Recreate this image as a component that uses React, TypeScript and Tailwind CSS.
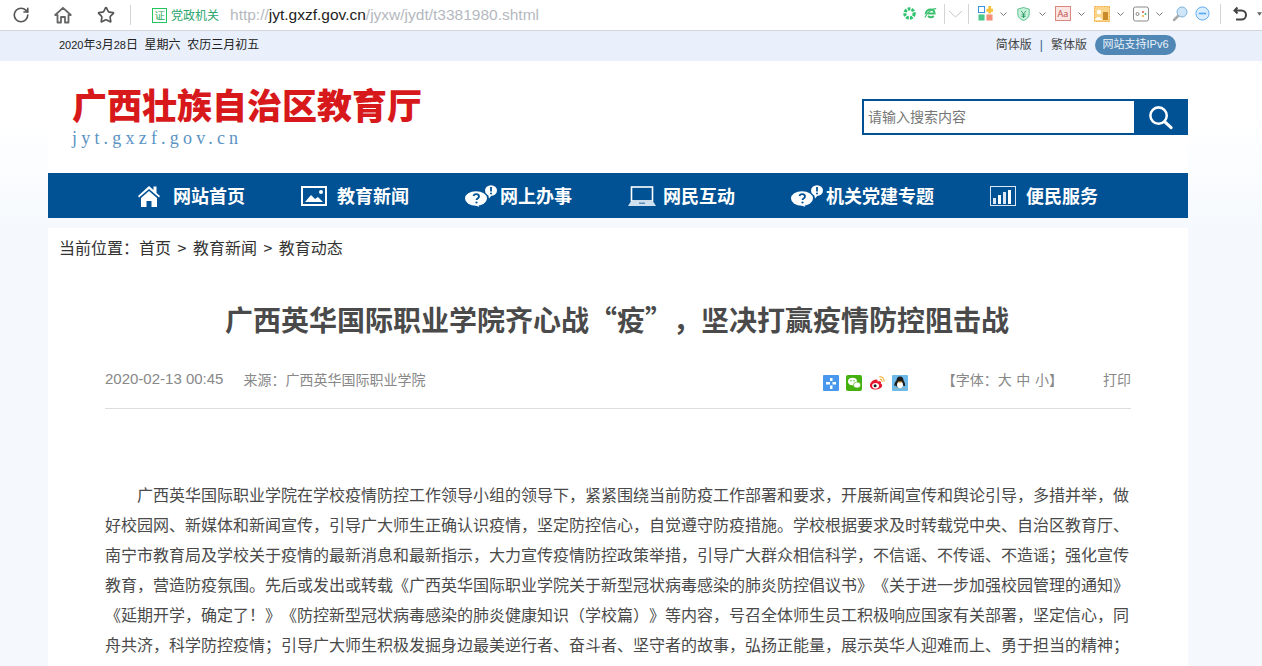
import { RotateCw, Star } from "lucide-react";

const sans = "font-['Liberation_Sans','Noto_Sans_CJK_SC',sans-serif]";
const cjk = "font-['Noto_Sans_CJK_SC',sans-serif]";

function Chev({ className = "" }: { className?: string }) {
  return (
    <svg viewBox="0 0 7 4" className={"h-1 w-[7px] " + className}>
      <path d="M.5.5l3 3 3-3" fill="none" stroke="#777" strokeWidth="1" />
    </svg>
  );
}

function Sep({ className = "" }: { className?: string }) {
  return <div className={"h-5 w-px bg-[#d4d4d4] " + className} />;
}

function BrowserBar() {
  return (
    <div className="flex h-[31px] items-center border-b border-[#d3d6da] bg-white">
      <RotateCw className="ml-[12px] h-[18px] w-[18px] text-[#555]" strokeWidth={2.2} />
      <svg viewBox="0 0 18 18" className="ml-[24px] h-[18px] w-[18px]">
        <path
          d="M9 1.800L16.800 9H14.500V16.500H11V11H7V16.500H3.500V9H1.200Z"
          fill="none"
          stroke="#666"
          strokeWidth="1.800"
          strokeLinejoin="round"
        />
      </svg>
      <Star className="ml-[25px] h-[18px] w-[18px] text-[#555]" strokeWidth={2.2} />
      <Sep className="ml-[15px]" />
      <div className="ml-[21px] flex h-[15px] w-[15px] items-center justify-center border border-[#22c55e] text-[10px] leading-none text-[#16a34a]">
        证
      </div>
      <span className={"ml-[4px] text-[12px] text-[#2aa56b] " + cjk}>党政机关</span>
      <span className={"ml-[11px] text-[15.500px] text-[#b5b9bf] " + sans}>
        http://<span className="text-[#222]">jyt.gxzf.gov.cn</span>/jyxw/jydt/t3381980.shtml
      </span>

      <div className="ml-auto flex items-center pb-[3px]">
        {/* green swirl */}
        <svg viewBox="0 0 14 14" className="h-[13px] w-[13px]">
          <circle cx="7" cy="7" r="5" fill="none" stroke="#2fc36f" strokeWidth="3.400" strokeDasharray="3 1.200" />
        </svg>
        {/* green browser e */}
        <svg viewBox="0 0 16 14" className="ml-[8px] h-[13px] w-[13px]">
          <path d="M2 8c0-4 3-6 6-6 3 0 5 2 5 5H5M5 10c2 2 5 2 7 0" fill="none" stroke="#3cc070" strokeWidth="2.400" />
          <path d="M1 12C4 5 10 1 15 1" fill="none" stroke="#3cc070" strokeWidth="1.400" />
        </svg>
        <Sep className="ml-[7px]" />
        <svg viewBox="0 0 15 8" className="ml-[3px] h-2 w-[15px]">
          <path d="M1 1l6.500 6 6.500-6" fill="none" stroke="#c4c4c4" strokeWidth="1" />
        </svg>
        <Sep className="ml-[5px]" />
        {/* app grid */}
        <svg viewBox="0 0 16 16" className="ml-[9px] h-[15px] w-[15px]">
          <rect x="0.500" y="0.500" width="6.500" height="6.500" fill="#fff" stroke="#2f8ee0" />
          <rect x="0.500" y="9" width="6.500" height="6.500" fill="#4cc98a" />
          <rect x="9" y="9" width="6.500" height="6.500" fill="#f58f7c" />
          <path d="M11 0h3v3h2v3h-2v2h-3V6H9V3h2z" fill="#f7c23a" />
        </svg>
        <Chev className="ml-[7px]" />
        {/* shield */}
        <svg viewBox="0 0 16 18" className="ml-[10px] h-4 w-[13px]">
          <path d="M8 1l7 2v6c0 4-3 6.500-7 8-4-1.500-7-4-7-8V3z" fill="#c8f0dc" stroke="#3cb878" />
          <path d="M5 5l3 4 3-4M8 9v5M5.500 10h5M5.500 12h5" fill="none" stroke="#23965c" strokeWidth="1" />
        </svg>
        <Chev className="ml-[9px]" />
        {/* font card */}
        <div className="ml-[9px] flex h-[15px] w-[16px] items-center justify-center border border-[#d98880] bg-[#fbe6e3] text-[9px] leading-none text-[#c0504d]">
          Aa
        </div>
        <Chev className="ml-[7px]" />
        {/* picture */}
        <svg viewBox="0 0 16 16" className="ml-[9px] h-4 w-4">
          <rect x="0.500" y="0.500" width="15" height="15" fill="#fbd58a" stroke="#f0a93a" strokeDasharray="2 1" />
          <circle cx="5" cy="6" r="2.200" fill="#fff" />
          <path d="M1 14c1-4 6-4 7 0z" fill="#fff" />
          <rect x="9" y="6" width="5" height="8" fill="#c98a2c" />
        </svg>
        <Chev className="ml-[7px]" />
        {/* game pad */}
        <svg viewBox="0 0 16 16" className="ml-[9px] h-4 w-4">
          <rect x="0.500" y="1" width="15" height="14" rx="2" fill="#fff" stroke="#888" />
          <circle cx="4.500" cy="8" r="1.500" fill="none" stroke="#888" />
          <circle cx="10" cy="6" r="1" fill="#e25555" />
          <circle cx="12.500" cy="8" r="1" fill="#3cb878" />
          <circle cx="10" cy="10" r="1" fill="#f0a93a" />
        </svg>
        <Chev className="ml-[7px]" />
        {/* zoom lens */}
        <svg viewBox="0 0 16 16" className="ml-[9px] h-4 w-4">
          <circle cx="10" cy="6" r="5" fill="#cfe6f8" stroke="#7fb2d8" />
          <path d="M6 10l-4 4" stroke="#aaa" strokeWidth="2.500" strokeLinecap="round" />
        </svg>
        {/* minus */}
        <svg viewBox="0 0 16 16" className="ml-[7px] h-[15px] w-[15px]">
          <circle cx="8" cy="8" r="7" fill="#dbeeff" stroke="#5aa9ee" />
          <path d="M4 8h8" stroke="#5aa9ee" strokeWidth="1.800" />
        </svg>
        <Sep className="ml-[10px]" />
        {/* undo */}
        <svg viewBox="0 0 14 16" className="ml-[12px] h-4 w-[14px]">
          <path
            d="M4.500 1.500L1.500 4.500L4.500 7.500M1.500 4.500H8.500a4.500 4.500 0 0 1 0 9H3"
            fill="none"
            stroke="#444"
            strokeWidth="2"
          />
        </svg>
        <svg viewBox="0 0 6 4" className="ml-[10px] h-1 w-[5px]">
          <path d="M0 0h6L3 4z" fill="#666" />
        </svg>
      </div>
    </div>
  );
}

function TopStrip() {
  return (
    <div className={"flex h-[30px] items-center bg-[#e9f0fc] pb-[3px] pl-[59px] text-[12px] text-[#222] " + sans}>
      <span className="whitespace-pre">
        <span className="text-[11px]">2020</span>年<span className="text-[11px]">3</span>月
        <span className="text-[11px]">28</span>日{"  "}星期六{"  "}农历三月初五
      </span>
      <div className="ml-auto flex items-center pr-[86px] text-[#444]">
        <span>简体版</span>
        <span className="mx-[8px] text-[#33628f]">|</span>
        <span>繁体版</span>
        <span className="ml-[8px] flex h-5 w-[81px] items-center justify-center rounded-full bg-[#5087b5] text-[11px] text-[#e8f0f8]">
          网站支持IPv6
        </span>
      </div>
    </div>
  );
}

function Brand() {
  return (
    <div className="flex h-[112px] items-start justify-between bg-white pl-[24px]">
      <div className="pt-[21px]">
        <div className={"text-[35px] font-black leading-[44px] text-[#d7191c] " + cjk}>广西壮族自治区教育厅</div>
        <div className="mt-[1px] font-['Liberation_Serif',serif] text-[18px] leading-[22px] tracking-[4.200px] text-[#5b93c4]">
          jyt.gxzf.gov.cn
        </div>
      </div>
      <div className="mt-[38px] flex h-[36px] w-[326px] border-2 border-[#005294] bg-white">
        <span className={"flex-1 pl-[4px] text-[14px] leading-[30px] text-[#777] " + cjk}>请输入搜索内容</span>
        <div className="flex w-[52px] items-center justify-center bg-[#005294]">
          <svg viewBox="0 0 28 28" className="h-[27px] w-[27px]">
            <circle cx="12" cy="12" r="8.500" fill="none" stroke="#fff" strokeWidth="2.600" />
            <path d="M18.500 18.500l6.500 6" stroke="#fff" strokeWidth="3.200" strokeLinecap="round" />
          </svg>
        </div>
      </div>
    </div>
  );
}

function ChatIcon() {
  return (
    <svg viewBox="0 0 32 22" className="h-[22px] w-[32px]">
      <ellipse cx="11" cy="13.500" rx="11" ry="7.300" fill="#fff" />
      <path d="M8 19l6 3-1-4z" fill="#fff" />
      <path
        d="M8.500 11c.5-2.500 5.500-2.500 5.500.5 0 2-2.500 2-2.500 3.500"
        fill="none"
        stroke="#005294"
        strokeWidth="1.800"
      />
      <circle cx="11.500" cy="17.500" r="1.100" fill="#005294" />
      <ellipse cx="26" cy="5.500" rx="6" ry="5.300" fill="#fff" />
      <path d="M23 9l1 4.500 3-3.500z" fill="#fff" />
      <path d="M26 2v4.500" stroke="#005294" strokeWidth="1.800" />
      <circle cx="26" cy="8.500" r="1" fill="#005294" />
    </svg>
  );
}

const navItems = [
  {
    label: "网站首页",
    gap: "ml-[13px]",
    icon: (
      <svg viewBox="0 0 22 22" className="h-[22px] w-[22px]">
        <path d="M11 1l4.500 4V1.500h3v6.500l3.500 3-1 1.500L11 4 1 12.500 0 11z" fill="#fff" />
        <path d="M3 13l8-7 8 7v9h-5.500v-6h-5v6H3z" fill="#fff" />
      </svg>
    ),
  },
  {
    label: "教育新闻",
    gap: "ml-[10px]",
    icon: (
      <svg viewBox="0 0 26 20" className="h-[20px] w-[26px]">
        <rect x="1" y="1" width="24" height="18" fill="none" stroke="#fff" strokeWidth="2" />
        <path d="M4 16l6-7 4 4 3-2 5 5z" fill="#fff" />
        <circle cx="20" cy="6" r="2" fill="#fff" />
      </svg>
    ),
  },
  { label: "网上办事", gap: "ml-[3px]", icon: <ChatIcon /> },
  {
    label: "网民互动",
    gap: "ml-[7px]",
    icon: (
      <svg viewBox="0 0 28 20" className="h-[20px] w-[28px]">
        <rect x="3.500" y="1" width="21" height="14" fill="none" stroke="#fff" strokeWidth="1.600" />
        <path d="M2.500 16h23l2.500 4H0z" fill="#cfe0ef" />
        <rect x="11" y="16.500" width="6" height="1.500" fill="#5b8db8" />
      </svg>
    ),
  },
  { label: "机关党建专题", gap: "ml-[3px]", icon: <ChatIcon /> },
  {
    label: "便民服务",
    gap: "ml-[10px]",
    icon: (
      <svg viewBox="0 0 26 20" className="h-[20px] w-[26px]">
        <rect x="0.500" y="0.500" width="25" height="19" fill="none" stroke="#dbe7f2" />
        <rect x="3" y="12" width="3" height="6" fill="#dbe7f2" />
        <rect x="8" y="9" width="3" height="9" fill="#fff" />
        <rect x="13" y="6" width="3" height="12" fill="#dbe7f2" />
        <rect x="18" y="4" width="3" height="14" fill="#fff" />
      </svg>
    ),
  },
];

function Nav() {
  return (
    <nav className="flex h-[45px] items-center justify-center gap-[56px] bg-[#005294]">
      {navItems.map((item) => (
        <div key={item.label} className="flex items-center">
          {item.icon}
          <span className={"text-[18px] font-bold text-white " + cjk + " " + item.gap}>{item.label}</span>
        </div>
      ))}
    </nav>
  );
}

function ShareIcons() {
  return (
    <div className="flex items-center gap-[7px]">
      <svg viewBox="0 0 16 16" className="h-4 w-4">
        <rect width="16" height="16" rx="1" fill="#4a98ee" />
        <path d="M7 3h2.500v3H7zM3 7h4v2.500H3zM9.500 7H13v2.500H9.500zM7 10.500h2.500V14H7z" fill="#fff" />
      </svg>
      <svg viewBox="0 0 16 16" className="h-4 w-4">
        <rect width="16" height="16" rx="2" fill="#46b010" />
        <ellipse cx="6.500" cy="6.500" rx="4.500" ry="3.700" fill="#fff" />
        <ellipse cx="11" cy="10" rx="3.600" ry="3" fill="#fff" stroke="#46b010" strokeWidth="0.600" />
        <circle cx="5" cy="5.800" r="0.700" fill="#46b010" />
        <circle cx="8" cy="5.800" r="0.700" fill="#46b010" />
      </svg>
      <svg viewBox="0 0 17 16" className="h-4 w-4">
        <path d="M1 10.500C1 7 6 3.500 8.500 4.500c1 .5.500 2 .500 2 3-1 4.500 0 3.500 2 1 .5 1.500 1.200 1.500 2.200 0 2.300-3.500 4.300-7 4.300S1 13.500 1 10.500z" fill="#e6162d" />
        <ellipse cx="7" cy="11" rx="3.700" ry="3" fill="#fff" />
        <circle cx="6.500" cy="11" r="1.600" fill="#222" />
        <path d="M11 1.500c3-.5 5.500 2 5 5M11.500 4c1.500-.2 2.500 1 2.300 2.500" fill="none" stroke="#f5a623" strokeWidth="1.100" />
      </svg>
      <svg viewBox="0 0 16 16" className="h-4 w-4">
        <rect width="16" height="16" rx="1" fill="#6db9ea" />
        <path d="M8 1.500c2.500 0 3.500 2 3.500 4 1 1.500 2 3.500 1.500 5.500-.5.500-1-.300-1.500-.8-.3 1-1 2-1.500 2.300H5.500c-.5-.3-1.200-1.300-1.500-2.300-.5.500-1 1.300-1.500.8C2 9 3 7 4.500 5.500c0-2 1-4 3.500-4z" fill="#1c1c1c" />
        <ellipse cx="8" cy="10" rx="3" ry="3.200" fill="#fff" />
        <path d="M5.500 6.500h5l-2.500 1.500z" fill="#f5a623" />
        <path d="M3.500 14.500c1-1.500 2.500-1.500 3.500-1H3.500zM12.500 14.500c-1-1.500-2.500-1.500-3.500-1h3.500z" fill="#f5a623" />
      </svg>
    </div>
  );
}

const lines =
  "广西英华国际职业学院在学校疫情防控工作领导小组的领导下，紧紧围绕当前防疫工作部署和要求，开展新闻宣传和舆论引导，多措并举，做好校园网、新媒体和新闻宣传，引导广大师生正确认识疫情，坚定防控信心，自觉遵守防疫措施。学校根据要求及时转载党中央、自治区教育厅、南宁市教育局及学校关于疫情的最新消息和最新指示，大力宣传疫情防控政策举措，引导广大群众相信科学，不信谣、不传谣、不造谣；强化宣传教育，营造防疫氛围。先后或发出或转载《广西英华国际职业学院关于新型冠状病毒感染的肺炎防控倡议书》《关于进一步加强校园管理的通知》《延期开学，确定了！》《防控新型冠状病毒感染的肺炎健康知识（学校篇）》等内容，号召全体师生员工积极响应国家有关部署，坚定信心，同舟共济，科学防控疫情；引导广大师生积极发掘身边最美逆行者、奋斗者、坚守者的故事，弘扬正能量，展示英华人迎难而上、勇于担当的精神；";

function Article() {
  return (
    <main className={"mt-[10px] bg-white pb-[40px] [text-spacing-trim:space-all] " + cjk}>
      <div className="pl-[11px] pt-[5px] text-[16px] leading-[28px] text-[#333]">
        当前位置：首页<span className="mx-[6.500px]">&gt;</span>教育新闻<span className="mx-[6.500px]">&gt;</span>教育动态
      </div>
      <h1 className="mt-[37px] pr-[2px] text-center text-[28px] font-bold leading-[42px] text-[#4a4a4a]">
        广西英华国际职业学院齐心战“疫”，坚决打赢疫情防控阻击战
      </h1>
      <div className="mx-[57px] mt-[20px] flex h-[49px] items-start border-b border-[#ddd] pt-[8px] text-[#888]">
        <span className={"text-[15px] leading-[22px] " + sans}>2020-02-13 00:45</span>
        <span className="ml-[20px] text-[14px] leading-[22px]">来源：广西英华国际职业学院</span>
        <div className="ml-auto mt-[7px]">
          <ShareIcons />
        </div>
        <span className="ml-[34px] whitespace-pre text-[14px] leading-[22px] [word-spacing:1.500px]">【字体：大 中 小】</span>
        <span className="ml-[40px] text-[14px] leading-[22px]">打印</span>
      </div>
      <p className="mx-[57px] mt-[70px] text-[16px] leading-[30px] text-[#4a4a4a] [text-indent:32px]">{lines}</p>
    </main>
  );
}

export default function App() {
  return (
    <div className="h-[666px] w-[1262px] overflow-hidden bg-white">
      <BrowserBar />
      <TopStrip />
      <div className="bg-[linear-gradient(to_bottom,#ffffff_0px,#ffffff_60px,#f5f9fd_170px)] pl-[48px] pr-[74px]">
        <Brand />
        <Nav />
        <Article />
      </div>
    </div>
  );
}
